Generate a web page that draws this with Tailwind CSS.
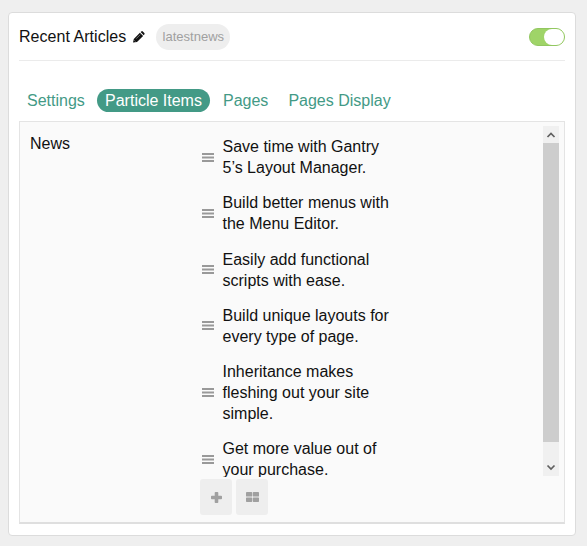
<!DOCTYPE html>
<html lang="en">
<head>
<meta charset="utf-8">
<title>Recent Articles</title>
<script src="https://cdn.jsdelivr.net/npm/@tailwindcss/browser@4"></script>
</head>
<body class="bg-[#efefef] w-[587px] h-[546px] overflow-hidden pl-2 pt-3 text-[16px] leading-[21px] text-[#111] font-['Liberation_Sans',Arial,sans-serif]">
<main class="w-[568px] h-[524px] bg-white border border-[#dcdcdc] rounded-[4px] px-[10px]">
  <header class="h-12 flex items-center border-b border-[#ebebeb]">
    <h1 class="tracking-[0.04px]">Recent Articles</h1>
    <svg class="ml-[7px] w-3 h-3" viewBox="0 0 12 12" fill="#111"><path d="M0 11.500l.8-3.600L6.900 1.800l3.200 3.200L4 11.100zM7.600 1.100l.7-.7q.8-.7 1.500 0l1.500 1.500q.7.800 0 1.500l-.6.800z"/><path d="M1.300 9.300l1.200 1.200M3.200 7.700l4-4" stroke="#fff" stroke-width=".4"/></svg>
    <span class="ml-[11px] h-[26px] w-[74px] rounded-full bg-[#eee] text-[#a0a0a0] text-[13px] leading-[25px] text-center">latestnews</span>
    <span class="ml-auto w-9 h-[18px] rounded-full bg-[#9fd468] border border-[#92c760] flex justify-end items-center"><span class="w-5 h-4 rounded-full bg-white"></span></span>
  </header>
  <nav class="mt-7 flex h-[23px] text-[#439a86] leading-[23px]">
    <a class="w-[78px] pl-2">Settings</a>
    <a class="w-[113px] text-center rounded-full bg-[#439a86] text-white">Particle Items</a>
    <a class="ml-[13px]">Pages</a>
    <a class="ml-5">Pages Display</a>
  </nav>
  <section class="mt-[9px] w-[546px] h-[403px] bg-[#fafafa] border border-[#e4e4e4] border-b-2 border-b-[#dfdfdf] flex pt-1 pl-[10px]">
    <div class="w-[170px] pt-[7px]">News</div>
    <div class="w-[359px]">
      <div class="h-[351px] flex overflow-hidden">
        <ul class="w-[343px] pt-[10px] flex flex-col gap-[14.28px]">
          <li class="flex items-center"><svg class="w-3 h-[9px] ml-[2px] mr-[8.5px]" viewBox="0 0 12 9" fill="#999"><path d="M0 0h12v2H0zM0 3.500h12v2H0zM0 7h12v2H0z"/></svg><span>Save time with Gantry<br>5’s Layout Manager.</span></li>
          <li class="flex items-center"><svg class="w-3 h-[9px] ml-[2px] mr-[8.5px]" viewBox="0 0 12 9" fill="#999"><path d="M0 0h12v2H0zM0 3.500h12v2H0zM0 7h12v2H0z"/></svg><span>Build better menus with<br>the Menu Editor.</span></li>
          <li class="flex items-center"><svg class="w-3 h-[9px] ml-[2px] mr-[8.5px]" viewBox="0 0 12 9" fill="#999"><path d="M0 0h12v2H0zM0 3.500h12v2H0zM0 7h12v2H0z"/></svg><span>Easily add functional<br>scripts with ease.</span></li>
          <li class="flex items-center"><svg class="w-3 h-[9px] ml-[2px] mr-[8.5px]" viewBox="0 0 12 9" fill="#999"><path d="M0 0h12v2H0zM0 3.500h12v2H0zM0 7h12v2H0z"/></svg><span>Build unique layouts for<br>every type of page.</span></li>
          <li class="flex items-center"><svg class="w-3 h-[9px] ml-[2px] mr-[8.5px]" viewBox="0 0 12 9" fill="#999"><path d="M0 0h12v2H0zM0 3.500h12v2H0zM0 7h12v2H0z"/></svg><span>Inheritance makes<br>fleshing out your site<br>simple.</span></li>
          <li class="flex items-center"><svg class="w-3 h-[9px] ml-[2px] mr-[8.5px]" viewBox="0 0 12 9" fill="#999"><path d="M0 0h12v2H0zM0 3.500h12v2H0zM0 7h12v2H0z"/></svg><span>Get more value out of<br>your purchase.</span></li>
        </ul>
        <div class="w-4 h-[350px] bg-[#f0f0f0] flex flex-col items-center">
          <svg class="w-4 h-[17px] shrink-0" viewBox="0 0 16 17" fill="none" stroke="#606060" stroke-width="1.7"><path d="M4.500 11L8 7.500l3.500 3.500"/></svg>
          <div class="w-full h-[299px] bg-[#cdcdcd]"></div>
          <svg class="w-4 h-[17px] mt-auto shrink-0" viewBox="0 0 16 17" fill="none" stroke="#606060" stroke-width="1.7"><path d="M4.500 6.500L8 10l3.500-3.500"/></svg>
        </div>
      </div>
      <div class="flex gap-1 mt-[2px]">
        <button class="w-8 h-9 rounded-[3px] bg-[#eee] flex items-center justify-center"><svg class="w-[11px] h-[11px]" viewBox="0 0 11 11" fill="#a0a0a0"><path d="M3.700.8q0-.8.8-.8h2q.8 0 .8.800V3.700h2.900q.8 0 .8.800v2q0 .8-.8.800H7.300v2.900q0 .8-.8.800h-2q-.8 0-.8-.8V7.300H.8Q0 7.300 0 6.500v-2q0-.8.8-.8h2.900z"/></svg></button>
        <button class="w-8 h-9 rounded-[3px] bg-[#eee] flex items-center justify-center"><svg class="w-[13px] h-[10px]" viewBox="0 0 13 10" fill="#a0a0a0"><rect width="6.200" height="4.600" rx=".7"/><rect x="6.800" width="6.200" height="4.600" rx=".7"/><rect y="5.400" width="6.200" height="4.600" rx=".7"/><rect x="6.800" y="5.400" width="6.200" height="4.600" rx=".7"/></svg></button>
      </div>
    </div>
  </section>
</main>
</body>
</html>
